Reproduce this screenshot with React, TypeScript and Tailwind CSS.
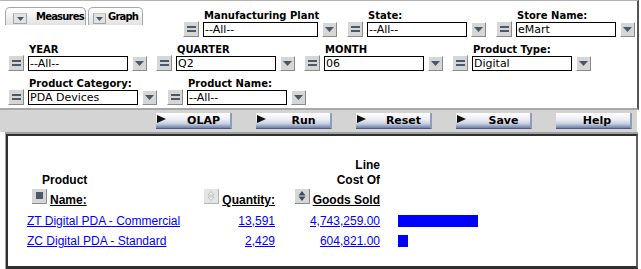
import React from 'react';

const Eq = () => (
  <div className="w-4 h-4 shrink-0 bg-[#d6d6d6] border border-t-white border-l-white border-b-[#8a8a8a] border-r-[#8a8a8a] flex flex-col items-center justify-center gap-[2px]">
    <div className="w-[9px] h-[2px] bg-[#4b5866]" />
    <div className="w-[9px] h-[2px] bg-[#4b5866]" />
  </div>
);

const Arrow = () => (
  <div className="w-[15px] h-[15px] shrink-0 bg-[#d6d6d6] border border-t-white border-l-white border-b-[#8a8a8a] border-r-[#8a8a8a] flex items-center justify-center">
    <svg width="9" height="5" viewBox="0 0 9 5">
      <path d="M0 0h9L4.5 5z" fill="#4b5866" />
    </svg>
  </div>
);

type FilterProps = { label: string; value: string; boxClass: string; className?: string };

function Filter({ label, value, boxClass, className = '' }: FilterProps) {
  return (
    <div className={`flex flex-col ${className}`}>
      <div className="h-[10px] leading-[10px] text-[10px] font-bold pl-[21px] whitespace-nowrap">{label}</div>
      <div className="flex items-end gap-[4px]">
        <Eq />
        <div className={`h-[15px] border border-black bg-white text-[11px] leading-[13px] pl-[1px] whitespace-nowrap overflow-hidden ${boxClass}`}>
          {value}
        </div>
        <Arrow />
      </div>
    </div>
  );
}

const TabArrow = ({ w }: { w: string }) => (
  <div className={`${w} h-[11px] shrink-0 bg-[#e2e2e2] border border-[#a4a4a4] border-t-[#c8c8c8] flex items-center justify-center`}>
    <svg width="7" height="4" viewBox="0 0 7 4">
      <path d="M0 0h7L3.5 4z" fill="#4b5866" />
    </svg>
  </div>
);

function Btn({ label, play = true }: { label: string; play?: boolean }) {
  return (
    <div className="w-[76px] h-[16px] flex items-start bg-[linear-gradient(to_bottom,#ffffff_0%,#e8ecf3_45%,#c6cee0_72%,#6d7fa7_100%)] border-r-2 border-r-[#8e9cbc] border-b border-b-[#4a5b85]">
      {play && (
        <svg width="9" height="8" viewBox="0 0 9 8" className="shrink-0 ml-[1px] mt-[2px]">
          <path d="M0 0L9 4L0 8z" fill="#111" />
        </svg>
      )}
      <span className={`flex-1 text-center text-[11px] font-bold leading-[15px] ${play ? 'pl-[11px]' : 'pl-[8px]'}`}>
        {label}
      </span>
    </div>
  );
}

const SortSquare = () => (
  <svg width="16" height="16" viewBox="0 0 16 16" className="shrink-0">
    <rect x="0" y="0" width="16" height="16" fill="#d6d6d6" />
    <path d="M0 15.5H15.5V0" stroke="#8a8a8a" fill="none" />
    <path d="M0.5 16V0.5H16" stroke="#fff" fill="none" />
    <rect x="5" y="4" width="7" height="7" fill="#4b5866" />
  </svg>
);

const SortOff = () => (
  <svg width="16" height="16" viewBox="0 0 16 16" className="shrink-0">
    <rect x="0" y="0" width="16" height="16" fill="#e4e4e4" />
    <path d="M0 15.5H15.5V0" stroke="#b4b4b4" fill="none" />
    <path d="M0.5 16V0.5H16" stroke="#fff" fill="none" />
    <path d="M5 7L8 3.5L11 7z M5 9L8 12.5L11 9z" stroke="#b8b8b8" fill="#f2f2f2" strokeWidth="0.8" />
  </svg>
);

const SortOn = () => (
  <svg width="16" height="16" viewBox="0 0 16 16" className="shrink-0">
    <rect x="0" y="0" width="16" height="16" fill="#d6d6d6" />
    <path d="M0 15.5H15.5V0" stroke="#8a8a8a" fill="none" />
    <path d="M0.5 16V0.5H16" stroke="#fff" fill="none" />
    <path d="M4.5 7.5L8 3L11.5 7.5z M4.5 8.5L8 13L11.5 8.5z" fill="#3f4c5c" />
  </svg>
);

const rows = [
  { name: 'ZT Digital PDA - Commercial', qty: '13,591', cost: '4,743,259.00', bar: 'w-[80px]' },
  { name: 'ZC Digital PDA - Standard', qty: '2,429', cost: '604,821.00', bar: 'w-[10px]' },
];

export default function App() {
  return (
    <div className="w-[641px] h-[269px] bg-white overflow-hidden font-['DejaVu_Sans',sans-serif] text-black">
      {/* Filters */}
      <div className="w-[639px] h-[110px] border-t border-t-[#b4b4b4] border-r-2 border-r-[#555] border-b-2 border-b-[#a8a8a8] pt-[6px] pl-[8px]">
        <div className="flex items-start">
          <div className="flex -ml-[3px]">
            <div className="w-[81px] h-[18px] rounded-t-[5px] border border-b-0 border-[#a8a8a8] bg-[linear-gradient(to_bottom,#ffffff,#e2e2e2)] flex items-start pl-[7px]">
              <div className="mt-[5px]"><TabArrow w="w-[14px]" /></div>
              <span className="mt-[4px] ml-[9px] text-[10px] leading-[10px] font-bold tracking-[-0.8px]">Measures</span>
            </div>
            <div className="ml-[2px] w-[55px] h-[18px] rounded-t-[5px] border border-b-0 border-[#a8a8a8] bg-[linear-gradient(to_bottom,#ffffff,#e2e2e2)] flex items-start pl-[4px]">
              <div className="mt-[5px]"><TabArrow w="w-[13px]" /></div>
              <span className="mt-[4px] ml-[2px] text-[10px] leading-[10px] font-bold tracking-[-0.8px]">Graph</span>
            </div>
          </div>
          <div className="flex gap-[10px] mt-[4px] ml-[40px]">
            <Filter label="Manufacturing Plant" value="--All--" boxClass="w-[115px]" />
            <Filter label="State:" value="--All--" boxClass="w-[100px]" />
            <Filter label="Store Name:" value="eMart" boxClass="w-[100px]" />
          </div>
        </div>
        <div className="flex gap-[9px] mt-[8px]">
          <Filter label="YEAR" value="--All--" boxClass="w-[100px]" />
          <Filter label="QUARTER" value="Q2" boxClass="w-[100px]" />
          <Filter label="MONTH" value="06" boxClass="w-[100px]" />
          <Filter label="Product Type:" value="Digital" boxClass="w-[100px]" />
        </div>
        <div className="flex gap-[10px] mt-[8px]">
          <Filter label="Product Category:" value="PDA Devices" boxClass="w-[110px]" />
          <Filter label="Product Name:" value="--All--" boxClass="w-[100px]" />
        </div>
      </div>

      {/* Button bar */}
      <div className="w-[637px] h-[22px] bg-[#d4d4d4] pt-[3px] pl-[156px] flex gap-[24px]">
        <Btn label="OLAP" />
        <Btn label="Run" />
        <Btn label="Reset" />
        <Btn label="Save" />
        <Btn label="Help" play={false} />
      </div>

      {/* Results */}
      <div className="ml-[5px] w-[633px] h-[137px] border-t-2 border-l border-[#a0a0a0]">
        <div className="h-full border-t-2 border-l-2 border-r-2 border-b-[3px] border-[#303030] border-r-[#606060] pt-[22px] pl-[19px] font-['Liberation_Sans',Arial,sans-serif] text-[12px]">
          <div className="grid grid-cols-[160px_88px_105px_auto] items-end">
            <div className="flex flex-col font-bold leading-[15px]">
              <div className="pl-[15px]">Product</div>
              <div className="h-[20px] flex pl-[4px] gap-[3px]">
                <div className="self-start"><SortSquare /></div>
                <span className="self-end underline">Name:</span>
              </div>
            </div>
            <div className="h-[20px] flex justify-end gap-[3px] font-bold leading-[15px]">
              <div className="self-start"><SortOff /></div>
              <span className="self-end underline">Quantity:</span>
            </div>
            <div className="flex flex-col items-end font-bold leading-[15px]">
              <div>Line</div>
              <div>Cost Of</div>
              <div className="h-[20px] flex gap-[3px]">
                <div className="self-start"><SortOn /></div>
                <span className="self-end underline">Goods Sold</span>
              </div>
            </div>
            <div />
          </div>
          <div className="mt-[3px]">
            {rows.map((r) => (
              <div key={r.name} className="grid grid-cols-[160px_88px_105px_auto] h-[20px] leading-[20px] text-[#0000ff]">
                <span className="underline whitespace-nowrap">{r.name}</span>
                <span className="underline text-right">{r.qty}</span>
                <span className="underline text-right">{r.cost}</span>
                <div className="pl-[18px] flex items-center">
                  <div className={`h-[12px] bg-[#0000ff] ${r.bar}`} />
                </div>
              </div>
            ))}
          </div>
        </div>
      </div>
    </div>
  );
}
